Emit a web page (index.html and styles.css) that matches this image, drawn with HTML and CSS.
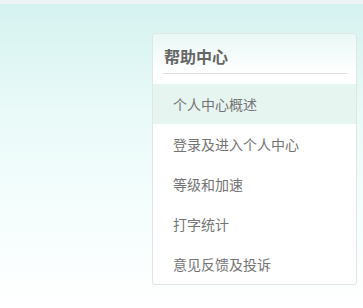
FILE: index.html
```html
<!DOCTYPE html>
<html lang="zh-CN">
<head>
    <meta charset="UTF-8">
    <meta name="viewport" content="width=device-width, initial-scale=1.0">
    <title>帮助中心</title>
    <link rel="stylesheet" href="styles.css">
</head>
<body>
    <div class="page">
        <div class="help-panel">
            <h2 class="help-title">帮助中心</h2>
            <ul class="help-menu">
                <li class="help-item active">个人中心概述</li>
                <li class="help-item">登录及进入个人中心</li>
                <li class="help-item">等级和加速</li>
                <li class="help-item">打字统计</li>
                <li class="help-item">意见反馈及投诉</li>
            </ul>
        </div>
    </div>
</body>
</html>
```

FILE: styles.css
```css
* {
    margin: 0;
    padding: 0;
    box-sizing: border-box;
}

body {
    font-family: "Noto Sans CJK SC", "Noto Sans", sans-serif;
    background: #fff;
    min-height: 100vh;
}

.page {
    min-height: 308px;
    border-top: 4px solid #edf3f3;
    background: linear-gradient(180deg, #d5f2f0 0%, #e9faf8 35%, #f5fefd 70%, #ffffff 100%);
    padding: 29px 0 0 152px;
}

.help-panel {
    width: 205px;
    border: 1px solid #e0e6e5;
    border-radius: 3px;
    background: linear-gradient(180deg, #e9f8f6 0px, #ffffff 40px);
}

.help-title {
    font-size: 16px;
    font-weight: 700;
    line-height: 22px;
    color: #666;
    padding: 11px 0 6px 1px;
    margin: 0 9px 10px 10px;
    border-bottom: 1px solid #dcdcdc;
}

.help-menu {
    list-style: none;
}

.help-item {
    height: 40px;
    line-height: 40px;
    padding-left: 20px;
    font-size: 14px;
    color: #747474;
}

.help-item.active {
    background: #e7f5f1;
}
```
